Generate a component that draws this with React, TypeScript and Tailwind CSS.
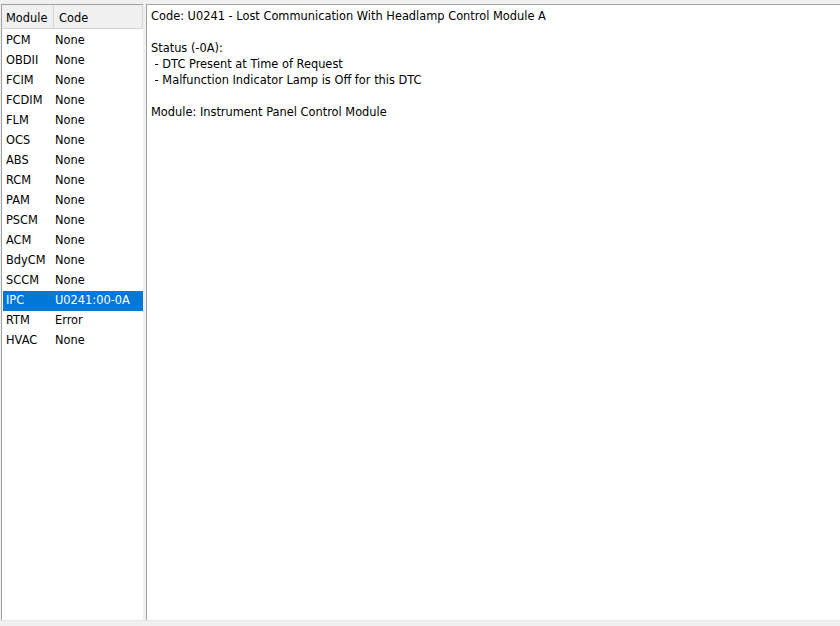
import React from "react";

const rows: [string, string][] = [
  ["PCM", "None"],
  ["OBDII", "None"],
  ["FCIM", "None"],
  ["FCDIM", "None"],
  ["FLM", "None"],
  ["OCS", "None"],
  ["ABS", "None"],
  ["RCM", "None"],
  ["PAM", "None"],
  ["PSCM", "None"],
  ["ACM", "None"],
  ["BdyCM", "None"],
  ["SCCM", "None"],
  ["IPC", "U0241:00-0A"],
  ["RTM", "Error"],
  ["HVAC", "None"],
];

export default function App() {
  return (
    <div
      className="w-[840px] h-[626px] bg-[#f0f0f0] flex flex-col overflow-hidden text-[11.4px] text-black"
      style={{ fontFamily: '"DejaVu Sans", Tahoma, sans-serif' }}
    >
      <div className="h-[4px] shrink-0" />
      <div className="flex flex-1 min-h-0 pl-[1px]">
        <div className="w-[142px] shrink-0 bg-white border-l border-t border-[#a0a0a0] flex flex-col">
          <div className="flex h-[24px] bg-[#f0f0f0] border-b border-[#d5d5d5]">
            <div className="w-[52px] border-r border-[#d5d5d5] pl-[4px] flex items-center pt-[5px]">Module</div>
            <div className="flex-1 pl-[5px] flex items-center border-r border-[#d5d5d5] pt-[5px]">Code</div>
          </div>
          <div className="pt-[2px] pl-[1px]">
            {rows.map(([m, c]) => {
              const sel = m === "IPC";
              return (
                <div
                  key={m}
                  className={`flex h-[20px] items-center ${sel ? "bg-[#0078d7] text-white" : ""}`}
                >
                  <div className="w-[52px] pl-[3px]">{m}</div>
                  <div className="flex-1">{c}</div>
                </div>
              );
            })}
          </div>
        </div>
        <div className="w-[3px] shrink-0" />
        <div className="flex-1 bg-white border-l border-t border-[#a0a0a0] pl-[4px] pt-[3px] leading-[16px]">
          <div>Code: U0241 - Lost Communication With Headlamp Control Module A</div>
          <div>&nbsp;</div>
          <div>Status (-0A):</div>
          <div>&nbsp;- DTC Present at Time of Request</div>
          <div>&nbsp;- Malfunction Indicator Lamp is Off for this DTC</div>
          <div>&nbsp;</div>
          <div>Module: Instrument Panel Control Module</div>
        </div>
      </div>
      <div className="h-[6px] shrink-0 bg-[#f0f0f0] border-t border-[#e6e6e6]" />
    </div>
  );
}
